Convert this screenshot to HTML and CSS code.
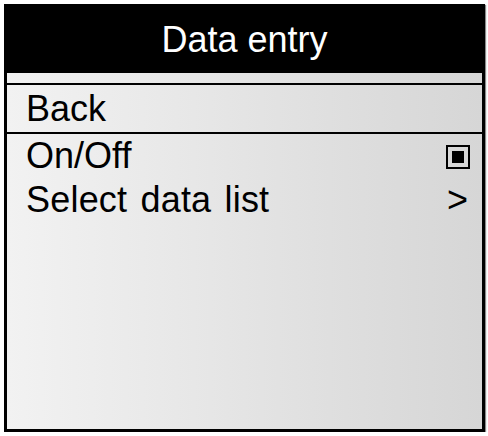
FILE: index.html
```html
<!DOCTYPE html>
<html>
<head>
<meta charset="utf-8">
<link rel="stylesheet" href="styles.css">
</head>
<body>
<div class="screen">
  <div class="header">Data entry</div>
  <div class="strip"></div>
  <div class="row back">Back</div>
  <div class="row">
    <span>On/Off</span>
    <span class="check"><span class="check-fill"></span></span>
  </div>
  <div class="row">
    <span class="wide">Select data list</span>
    <span class="arrow">&gt;</span>
  </div>
</div>
</body>
</html>
```
FILE: styles.css
```css
html, body {
  margin: 0;
  padding: 0;
  background: #ffffff;
}
body {
  font-family: "Liberation Sans", Arial, sans-serif;
}
.screen {
  box-sizing: border-box;
  margin: 4px 0 0 4px;
  width: 481px;
  height: 428px;
  border: 3px solid #000;
  background: linear-gradient(to right, #f2f2f2, #d6d6d6);
  box-shadow: 1px 1px 1px #888;
  display: flex;
  flex-direction: column;
}
.header {
  height: 66px;
  margin: -3px -3px 0 -3px;
  padding-top: 3px;
  background: #000;
  color: #fff;
  font-size: 36px;
  display: flex;
  align-items: center;
  justify-content: center;
}
.strip {
  height: 10px;
  border-bottom: 2px solid #000;
}
.row {
  height: 44px;
  display: flex;
  align-items: center;
  justify-content: space-between;
  padding: 0 12px 0 19px;
  font-size: 36px;
  color: #000;
}
.back {
  height: 47px;
  border-bottom: 2px solid #000;
}
.wide {
  word-spacing: 3px;
  letter-spacing: 0.2px;
}
.check {
  box-sizing: border-box;
  width: 24px;
  height: 24px;
  border: 2px solid #000;
  display: flex;
  align-items: center;
  justify-content: center;
  margin-top: 2px;
}
.check-fill {
  width: 12px;
  height: 12px;
  background: #000;
}
.arrow {
  margin-right: 2px;
}
```
